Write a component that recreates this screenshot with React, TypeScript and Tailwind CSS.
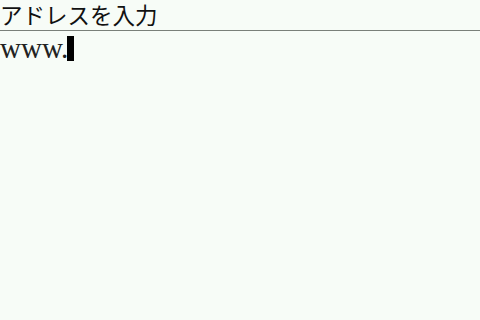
export default function App() {
  return (
    <div className="w-[480px] h-[320px] bg-[#f7fcf7] overflow-hidden" style={{ fontFamily: '"Liberation Serif", "Noto Sans CJK JP", serif' }}>
      <div className="h-[31px] flex items-end border-b border-[#7a807a]">
        <span className="text-[22.5px] leading-[27px] text-[#111]">アドレスを入力</span>
      </div>
      <div className="flex items-start pt-[5px]">
        <span className="text-[29px] leading-[25px] text-[#222]">www.</span>
        <span className="w-[7px] h-[25px] -ml-[1px] bg-black" />
      </div>
    </div>
  )
}
